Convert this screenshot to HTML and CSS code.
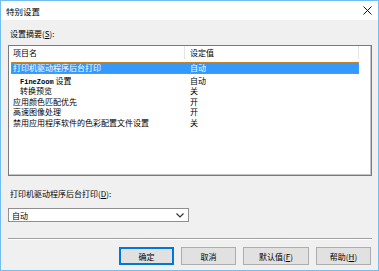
FILE: index.html
```html
<!DOCTYPE html>
<html lang="zh-CN">

<head>
    <meta charset="UTF-8">
    <title>特别设置</title>
    <link rel="stylesheet" href="styles.css">
</head>

<body>
    <div class="window">
        <div class="titlebar">
            <span class="title">特别设置</span>
            <svg class="close" width="9" height="9" viewBox="0 0 9 9">
                <path d="M0.5 0.5 L8.5 8.5 M8.5 0.5 L0.5 8.5" stroke="#111" stroke-width="1" fill="none"/>
            </svg>
        </div>

        <div class="content">
            <div class="label">设置摘要(<u>S</u>):</div>

            <div class="listbox">
                <div class="list-header">
                    <div class="col-name">项目名</div>
                    <div class="col-value">设定值</div>
                </div>
                <div class="row selected">
                    <div class="col-name">打印机驱动程序后台打印</div>
                    <div class="col-value">自动</div>
                </div>
                <div class="rows">
                    <div class="row">
                        <div class="col-name indent"><span class="mono">FineZoom</span> 设置</div>
                        <div class="col-value">自动</div>
                    </div>
                    <div class="row">
                        <div class="col-name indent">转换预览</div>
                        <div class="col-value">关</div>
                    </div>
                    <div class="row">
                        <div class="col-name">应用颜色匹配优先</div>
                        <div class="col-value">开</div>
                    </div>
                    <div class="row">
                        <div class="col-name">高速图像处理</div>
                        <div class="col-value">开</div>
                    </div>
                    <div class="row">
                        <div class="col-name">禁用应用程序软件的色彩配置文件设置</div>
                        <div class="col-value">关</div>
                    </div>
                </div>
            </div>

            <div class="label label-spool">打印机驱动程序后台打印(<u>D</u>):</div>
            <div class="select">
                <span>自动</span>
                <svg width="8" height="5" viewBox="0 0 8 5">
                    <path d="M0.5 0.5 L4 4 L7.5 0.5" stroke="#333" stroke-width="1.2" fill="none"/>
                </svg>
            </div>

            <div class="separator"></div>

            <div class="buttons">
                <button class="btn default">确定</button>
                <button class="btn">取消</button>
                <button class="btn wide">默认值(<u>F</u>)</button>
                <button class="btn">帮助(<u>H</u>)</button>
            </div>
        </div>
    </div>
</body>

</html>
```

FILE: styles.css
```css
body {
    margin: 0;
    font-family: "Noto Sans CJK SC", "Liberation Sans", sans-serif;
    color: #000000;
    background: #ffffff;
}

.window {
    width: 379px;
    height: 271px;
    box-sizing: border-box;
    border: 1px solid #74bdef;
    display: flex;
    flex-direction: column;
}

.titlebar {
    height: 19px;
    background: #ffffff;
    display: flex;
    align-items: center;
    justify-content: space-between;
    padding: 0 6px 0 5px;
    font-size: 8.5px;
}

.close {
    margin-top: -1px;
}

.content {
    flex: 1;
    background: #f0f0f0;
    padding: 9px 6px 0 7px;
    display: flex;
    flex-direction: column;
    font-size: 8px;
}

.label {
    height: 10px;
    line-height: 10px;
    padding-left: 2px;
}

.listbox {
    margin-top: 6px;
    height: 131px;
    box-sizing: border-box;
    background: #ffffff;
    border: 1px solid #7a7a7a;
    box-shadow: inset -1px -1px 0 #c4c4c4;
    padding: 0 12px 0 2px;
}

.list-header {
    display: flex;
    height: 13px;
    line-height: 13px;
}

.list-header .col-value {
    border-left: 1px solid #e5e5e5;
    border-right: 1px solid #e5e5e5;
    padding-left: 5px;
}

.row {
    display: flex;
    height: 10.4px;
    line-height: 10.4px;
}

.row.selected {
    margin-top: 3px;
    height: 12px;
    line-height: 12px;
    background: #3399ff;
    color: #ffffff;
    outline: 1px dotted #c98a2e;
    outline-offset: -1px;
}

.rows {
    margin-top: 2px;
}

.col-name {
    width: 173px;
    box-sizing: border-box;
    padding-left: 2px;
    white-space: nowrap;
}

.col-value {
    flex: 1;
    padding-left: 6px;
}

.indent {
    padding-left: 9px;
}

.mono {
    font-family: "Liberation Mono", monospace;
    font-weight: bold;
    font-size: 7px;
}

.label-spool {
    margin-top: 13px;
}

.select {
    margin-top: 9px;
    width: 181px;
    height: 14px;
    box-sizing: border-box;
    background: #ffffff;
    border: 1px solid #8f8f8f;
    display: flex;
    align-items: center;
    justify-content: space-between;
    padding: 0 4px 0 3px;
}

.separator {
    margin-top: 16px;
    border-top: 1px solid #a0a0a0;
    border-bottom: 1px solid #ffffff;
}

.buttons {
    margin-top: 7px;
    display: flex;
    justify-content: flex-end;
    gap: 7px;
    padding-right: 1px;
}

.btn {
    width: 55px;
    height: 18px;
    box-sizing: border-box;
    background: #e1e1e1;
    border: 1px solid #adadad;
    font-family: inherit;
    font-size: 8px;
    padding: 0;
    color: #000000;
}

.btn.default {
    border: 2px solid #0078d7;
}

.btn.wide {
    width: 66px;
}
```
